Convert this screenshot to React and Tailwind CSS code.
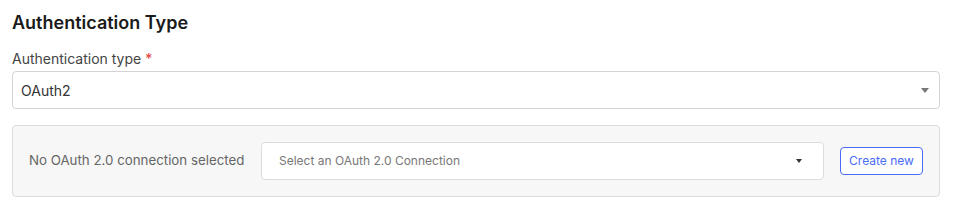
import React from "react";

export default function App() {
  return (
    <div className="w-[954px] h-[210px] bg-white pl-3 pr-[14px] pt-[11px] font-['Inter',sans-serif]">
      <h2 className="text-[18px] leading-[24px] font-semibold text-[#1a1a1a]">Authentication Type</h2>

      {/* Auth type select */}
      <div className="mt-[14px]">
        <label className="block text-[14px] leading-[20px] text-[#444]">
          Authentication type <span className="text-[#e53935]">*</span>
        </label>
        <div className="mt-[2px] h-[38px] border border-[#d4d4d4] rounded-[4px] flex items-center justify-between pl-2 pr-[10px]">
          <span className="text-[14px] text-[#333]">OAuth2</span>
          <span className="w-0 h-0 border-l-[4px] border-r-[4px] border-t-[5px] border-l-transparent border-r-transparent border-t-[#777]" />
        </div>
      </div>

      {/* OAuth connection panel */}
      <div className="mt-[16px] h-[72px] bg-[#f7f7f7] border border-[#dcdcdc] rounded-[4px] flex items-center pl-4 pr-4">
        <span className="w-[232px] shrink-0 whitespace-nowrap text-[13.3px] text-[#666]">No OAuth 2.0 connection selected</span>
        <div className="flex-1 h-[38px] bg-white border border-[#dcdcdc] rounded-[4px] flex items-center justify-between pl-[17px] pr-[21px]">
          <span className="text-[12px] text-[#777]">Select an OAuth 2.0 Connection</span>
          <span className="w-0 h-0 border-l-[3.5px] border-r-[3.5px] border-t-[4px] border-l-transparent border-r-transparent border-t-[#333]" />
        </div>
        <button className="ml-[16px] w-[83px] shrink-0 whitespace-nowrap h-[28px] border border-[#4a6cf7] rounded-[4px] text-[12px] text-[#4a6cf7] bg-white">
          Create new
        </button>
      </div>
    </div>
  );
}
